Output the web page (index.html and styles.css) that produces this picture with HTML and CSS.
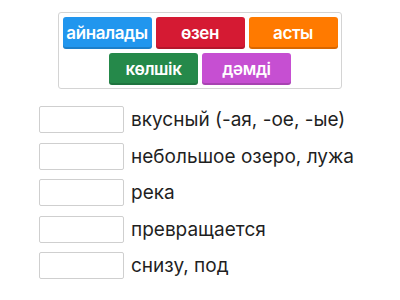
FILE: index.html
```html
<!DOCTYPE html>
<html lang="ru">
<head>
    <meta charset="UTF-8">
    <title>Match up</title>
    <link rel="stylesheet" href="styles.css">
</head>
<body>
    <!-- Word bank -->
    <div class="bank">
        <div class="tile blue">айналады</div>
        <div class="tile red">өзен</div>
        <div class="tile orange">асты</div>
        <div class="tile green">көлшік</div>
        <div class="tile purple">дәмді</div>
    </div>

    <!-- Targets -->
    <div class="targets">
        <div class="row"><div class="slot"></div><span class="def">вкусный (-ая, -ое, -ые)</span></div>
        <div class="row"><div class="slot"></div><span class="def">небольшое озеро, лужа</span></div>
        <div class="row"><div class="slot"></div><span class="def">река</span></div>
        <div class="row"><div class="slot"></div><span class="def">превращается</span></div>
        <div class="row"><div class="slot"></div><span class="def">снизу, под</span></div>
    </div>
</body>
</html>
```

FILE: styles.css
```css
body {
    margin: 0;
    background-color: #fff;
    font-family: Inter, "Liberation Sans", sans-serif;
    color: #1f1f1f;
}

.bank {
    width: 284px;
    margin: 12px 0 0 58px;
    box-sizing: border-box;
    border: 1px solid #d4d4d4;
    border-radius: 3px;
    padding: 4px 3px 3px;
    display: flex;
    flex-wrap: wrap;
    justify-content: center;
    gap: 4px;
}

.tile {
    width: 89px;
    height: 32px;
    box-sizing: border-box;
    border-radius: 3px;
    color: #fff;
    font-size: 17px;
    font-weight: 600;
    letter-spacing: -0.4px;
    display: flex;
    align-items: center;
    justify-content: center;
    box-shadow: inset 0 -2px 0 rgba(0, 0, 0, 0.15);
}

.blue { background-color: #2196ee; }
.red { background-color: #d51a33; }
.orange { background-color: #ff7a00; }
.green { background-color: #25894a; }
.purple { background-color: #c64fd2; }

.targets {
    margin: 17px 0 0 39px;
    display: flex;
    flex-direction: column;
    gap: 9.5px;
}

.row {
    display: flex;
    align-items: center;
    gap: 7px;
}

.slot {
    width: 85px;
    height: 27px;
    box-sizing: border-box;
    border: 1px solid #cfcfcf;
    border-radius: 2px;
    background-color: #fff;
}

.def {
    font-size: 19px;
}
```
